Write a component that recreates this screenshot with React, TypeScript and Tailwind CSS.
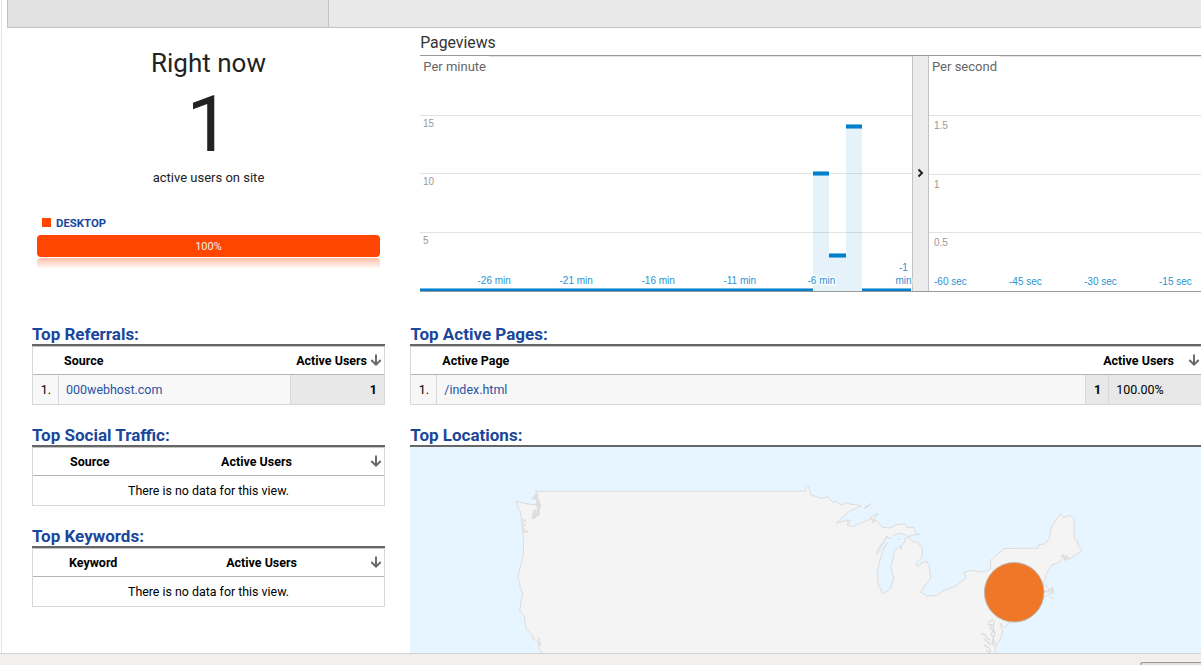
import React from "react";

const LAND =
  "M516.3 500.7 L523.3 503.3 L530 504.3 L535 504.7 L538 503 L537.3 495 L535.7 491.3 L805.7 491.3 L806 485.8 L809 486.5 L810.7 495 L816.7 496.7 L820.7 498.3 L828.3 496.7 L830 499.7 L833.3 502.3 L836 501 L841.3 505 L847.3 502.3 L848.7 504 L855 504.7 L861 506 L849.3 511.3 L842 518 L836 523.3 L846.7 520.3 L850.3 520.3 L847.3 525 L852.3 526.7 L861 523 L870 519.3 L872.3 516 L878.3 513.7 L873.3 519 L872 523 L876 520.5 L879 523 L882.7 527.3 L890 528 L896 524.7 L905.3 523.7 L906.7 527.3 L914 527.3 L915.3 533.3 L919.7 534.5 L912.7 535 L908.3 536.7 L904 534 L900 533.3 L893.3 535.3 L890 539 L888 537 L886 536.7 L883.3 543.3 L878 550 L876.7 554 L881.7 549 L887.7 542.7 L883.3 550 L880 560 L877.3 571.7 L878.3 585 L882.7 593.5 L890 589.3 L893.7 578.3 L890.7 566.7 L893 560 L894 551.7 L900 546 L901 550 L902 545 L904.7 542 L904.7 538.3 L909.3 537.7 L912 541 L918.3 542.7 L922.3 548.3 L922 557.3 L916.3 563.3 L917.3 566.7 L922 563 L926.7 561 L929.3 566.7 L930.7 578.3 L925 585 L920.7 592 L926.7 596 L936.7 595.3 L943.3 591 L956.7 585.7 L965.7 578.3 L964.3 572 L971.7 570.5 L977 571 L979 572 L985 571.7 L991 568.7 L990.3 560.7 L992 559 L1004 548.5 L1038 548.3 L1039 544.7 L1044 544 L1046.7 542.3 L1050 536.7 L1050 531.7 L1052.7 525 L1060.3 513.7 L1063.3 517.7 L1070 515.3 L1074.3 519.5 L1074.3 539 L1077.7 541 L1078.3 546 L1082.3 550.7 L1078.3 553.3 L1074 555 L1072 558 L1066.7 559.3 L1063 558 L1058.3 562.7 L1052 565 L1048 571 L1046 575 L1045 580 L1043 584 L1047.3 587 L1050 591 L1053 591 L1052 588 L1054 592 L1048 595 L1042 598 L1030 613 L1010 622 L1005 627.3 L1000 623.3 L1002.7 631.7 L1000 640 L996 645 L994.5 653 L994 656 L544 656 L539.3 649.3 L538 641.7 L533.3 639 L532.7 635.7 L525.7 627.7 L524.3 616 L519.7 610.7 L521 602 L522.7 593.3 L520 587.3 L519.7 581.7 L517.7 577.3 L521.3 563.3 L523 556.7 L523.7 541.7 L522.7 530 L522 521.7 L520 510.7 L517.3 506 Z";

const SOUND =
  "M531.5 498 L534 496.5 L535 494.5 L538 494 L537.5 498 L539.5 502 L541 506 L539.5 509 L539.5 515 L536 517 L534 519 L532 518.5 L532.5 514.5 L534 510.5 L536 509.5 L535.5 512.5 L537 512 L537.5 507 L535.5 505 L537 501 L535.5 499 L533 499.5 Z";

const ROUGH_COAST =
  "M521 519.5 L526 520.5 L523 522 M522 524 L525.5 525 L522.5 527.5 L525 529 L522.5 530.5 L528 531.5 L524 532.5 M537 638 L539.5 639 L539 642 L541.5 644 L540 645 L538 642 M864 508 L871 503.5 L868 507 Z M847 521 L849 525 M871 517 L873 522 L875 519 M878 549 L884 541 L888 536 M897 539 L899 539.5 M900 538.5 L900.5 540 M897 543 L897.5 542 M895.5 547 L896 548";

const BAYS =
  "M988 622 L991 621 L993 619 M987.5 624 L992 625 L990 628 L993 631 L991 635 L994 637 L992 642 L994 646 M981 633 L985 635 L987 638 L990 640 M984 639 L988 642 L991 645 M984 645 L989 648 L991 652 M986 650 L990 653 M994 621 L993 628 L995 634 L993 639 L996 645 M1061 557 L1063 555 L1065 560 L1066 556 L1070 559 M1044 591 L1048 592 L1052 588 L1053 591 L1051 593 M1050 597 L1053 598";

function SortArrow() {
  return (
    <svg width="12" height="12" viewBox="0 0 12 12" className="mb-[2px] shrink-0">
      <path d="M6 0.5V10.5M1.3 6L6 10.6L10.7 6" fill="none" stroke="#666" strokeWidth="1.9" />
    </svg>
  );
}

function Heading({ children }: { children: React.ReactNode }) {
  return (
    <h2 className="h-[24px] border-b-2 border-[#666] text-[17px] leading-[25px] font-bold whitespace-nowrap text-[#1a479b]">
      {children}
    </h2>
  );
}

function EmptyTable({ title, column, nameClass, usersClass }: { title: string; column: string; nameClass: string; usersClass: string }) {
  return (
    <section className="mt-[18px]">
      <Heading>{title}</Heading>
      <div className="h-[59px] border border-[#d8d8d8] border-t-[#c4c4c4] text-[12.48px]">
        <div className="flex h-[28px] items-center border-b border-[#b5b5b5] pt-px pr-[2px] leading-[18px] font-bold">
          <span className={nameClass}>{column}</span>
          <span className={usersClass}>Active Users</span>
          <span className="ml-auto"><SortArrow /></span>
        </div>
        <div className="text-center text-[12.4px] leading-[30px]">There is no data for this view.</div>
      </div>
    </section>
  );
}

function Step({ x, w, y }: { x: number; w: number; y: number }) {
  return (
    <g fill="#0080cc">
      <rect x={x} y={y} width={w} height={5} opacity="0.55" />
      <rect x={x} y={y + 1} width={w} height={3} />
    </g>
  );
}

function Chart() {
  return (
    <svg width="781" height="237" viewBox="420 55 781 237" className="block" shapeRendering="crispEdges">
      <g fill="#e3e3e3">
        <rect x="489" y="56" width="423" height="1" />
        <rect x="1000" y="56" width="201" height="1" />
        <rect x="420" y="115" width="781" height="1" />
        <rect x="420" y="173" width="492" height="1" />
        <rect x="929" y="174" width="272" height="1" />
        <rect x="420" y="232" width="781" height="1" />
      </g>
      <g fill="#0080cc" fillOpacity="0.1">
        <rect x="813" y="172" width="16" height="119" />
        <rect x="846" y="125" width="16" height="166" />
        <rect x="829" y="257" width="17" height="34" />
      </g>
      <Step x={813} w={16} y={171} />
      <Step x={829} w={17} y={253} />
      <Step x={846} w={16} y={124} />
      <Step x={420} w={393} y={288} />
      <Step x={862} w={49} y={288} />
      <rect x="420" y="55" width="781" height="1" fill="#999" />
      <rect x="420" y="291" width="781" height="1" fill="#999" />
      <rect x="912" y="56" width="17" height="235" fill="#c2c2c2" />
      <rect x="913" y="56" width="15" height="235" fill="#ececec" />
      <path d="M918.5 169.5L922 173L918.5 176.5" fill="none" stroke="#222" strokeWidth="2" shapeRendering="auto" />
      <g fontFamily="Roboto, sans-serif" fontSize="13" fill="#666">
        <text x="423.3" y="71">Per minute</text>
        <text x="932" y="71">Per second</text>
      </g>
      <g fontFamily="'Liberation Sans', sans-serif" fontSize="10" fill="#999">
        <text x="423" y="127">15</text>
        <text x="423" y="185">10</text>
        <text x="423" y="244">5</text>
        <text x="934" y="129">1.5</text>
        <text x="934" y="188">1</text>
        <text x="934" y="246">0.5</text>
      </g>
      <g fontFamily="'Liberation Sans', sans-serif" fontSize="10" fill="#2b93d1" stroke="#fff" strokeOpacity="0.8" strokeWidth="3" strokeLinejoin="round" paintOrder="stroke">
        <text x="477.5" y="284">-26 min</text>
        <text x="559.5" y="284">-21 min</text>
        <text x="641.5" y="284">-16 min</text>
        <text x="723.4" y="284">-11 min</text>
        <text x="807.5" y="284">-6 min</text>
        <text x="898.9" y="271">-1</text>
        <text x="895.5" y="284">min</text>
        <text x="934" y="285">-60 sec</text>
        <text x="1009" y="285">-45 sec</text>
        <text x="1084" y="285">-30 sec</text>
        <text x="1159" y="285">-15 sec</text>
      </g>
    </svg>
  );
}

function LocationMap() {
  return (
    <svg width="791" height="206" viewBox="410 447 791 206" className="block bg-[#e6f5ff]">
      <path d={LAND} fill="#f4f4f4" stroke="#dcdcdc" strokeWidth="1" strokeLinejoin="round" />
      <path d={SOUND} fill="#dcdee0" stroke="#dcdcdc" strokeWidth="0.6" />
      <path d={ROUGH_COAST} fill="none" stroke="#dcdcdc" strokeWidth="1" />
      <path d={BAYS} fill="none" stroke="#d8dbdd" strokeWidth="1.3" />
      <circle cx="1014.2" cy="592.3" r="29.8" fill="#ef7828" stroke="#bcb9b5" strokeWidth="1" />
    </svg>
  );
}

export default function App() {
  return (
    <div className="flex h-[665px] w-[1201px] flex-col overflow-hidden bg-white font-['Roboto',sans-serif] text-black">
      <main className="ml-px flex h-[653px] flex-col overflow-hidden border-l border-[#e4e4e4]">
        <div className="ml-[5px] flex h-[28px] shrink-0 border-b border-l border-[#c2c2c2] bg-[#e9e9e9]">
          <div className="w-[321px] border-r border-[#c2c2c2] bg-[#e1e1e1]" />
        </div>
        <div className="flex pl-[30px]">
          <div className="w-[353px] shrink-0">
            <div className="flex h-[294px] flex-col px-[5px] text-[#222]">
              <h1 className="mt-[17px] h-[36px] text-center text-[26px] leading-[36px]">Right now</h1>
              <div className="mt-[3px] h-[80px] text-center text-[78px] leading-[81px]">1</div>
              <div className="mt-[5px] h-[18px] text-center text-[13px] leading-[18px]">active users on site</div>
              <div className="mt-[29px] flex h-[14px] items-start pl-[5px]">
                <span className="mt-[2px] size-[9px] bg-[#ff4600]" />
                <span className="ml-[5px] text-[11.4px] leading-[15px] font-bold text-[#1a479b]">DESKTOP</span>
              </div>
              <div className="mt-[5px] h-[22px] rounded-[4px] bg-[#ff4600] text-center text-[11px] leading-[23px] text-[#eee]">100%</div>
              <div className="mt-px h-[11px] rounded-t-[4px] bg-linear-to-b from-[#ff4600]/35 to-[#ff4600]/0" />
            </div>
            <section>
              <Heading>Top Referrals:</Heading>
              <div className="h-[59px] border border-[#d8d8d8] border-t-[#c4c4c4] text-[12.48px]">
                <div className="flex h-[28px] items-center border-b border-[#b5b5b5] pt-px pr-[2px] pl-[31px] leading-[18px] font-bold">
                  <span>Source</span>
                  <span className="mr-[3px] ml-auto">Active Users</span>
                  <SortArrow />
                </div>
                <div className="flex h-[29px] bg-[#f8f8f8] leading-[29px]">
                  <span className="w-[26px] border-r border-[#d8d8d8] pl-px text-center">1.</span>
                  <span className="w-[231px] pl-[7px] text-[#2a52a3]">000webhost.com</span>
                  <span className="flex-1 border-l border-[#d8d8d8] bg-[#e8e8e8] pr-[7px] text-right font-bold">1</span>
                </div>
              </div>
            </section>
            <EmptyTable title="Top Social Traffic:" column="Source" nameClass="ml-[37px]" usersClass="ml-[111.7px]" />
            <EmptyTable title="Top Keywords:" column="Keyword" nameClass="ml-[36px]" usersClass="ml-[108.8px]" />
          </div>
          <div className="ml-[25px] w-[791px] shrink-0">
            <div className="h-[294px] pl-[10px]">
              <h2 className="h-[27px] pl-[0.2px] text-[15.8px] leading-[29px] text-[#333]">Pageviews</h2>
              <Chart />
            </div>
            <section>
              <Heading><span className="ml-[0.4px]">Top Active Pages:</span></Heading>
              <div className="h-[59px] border-t border-b border-l border-[#d8d8d8] border-t-[#c4c4c4] text-[12.48px]">
                <div className="flex h-[28px] items-center border-b border-[#b5b5b5] pt-px pr-[1px] pl-[31.3px] leading-[18px] font-bold">
                  <span>Active Page</span>
                  <span className="mr-[14px] ml-auto">Active Users</span>
                  <SortArrow />
                </div>
                <div className="flex h-[29px] bg-[#f7f7f7] leading-[29px]">
                  <span className="w-[26px] border-r border-[#d8d8d8] pl-px text-center">1.</span>
                  <span className="w-[648px] pl-[7.3px] text-[#2a52a3]">/index.html</span>
                  <span className="w-[23px] border-l border-[#d8d8d8] bg-[#e8e8e8] pl-px text-center font-bold">1</span>
                  <span className="flex-1 border-l border-[#d8d8d8] bg-[#e8e8e8] pl-[7.3px]">100.00%</span>
                </div>
              </div>
            </section>
            <section className="mt-[18px]">
              <Heading><span className="ml-[0.3px]">Top Locations:</span></Heading>
              <LocationMap />
            </section>
          </div>
        </div>
      </main>
      <footer className="flex h-[12px] shrink-0 justify-end overflow-hidden border-t border-[#d2d2d2] bg-[#f1f0ee]">
        <div className="mt-[8px] h-[12px] w-[61px] rounded-tl-[3px] border-t border-l border-[#9b9a98] bg-[#e0dfdd]" />
      </footer>
    </div>
  );
}
